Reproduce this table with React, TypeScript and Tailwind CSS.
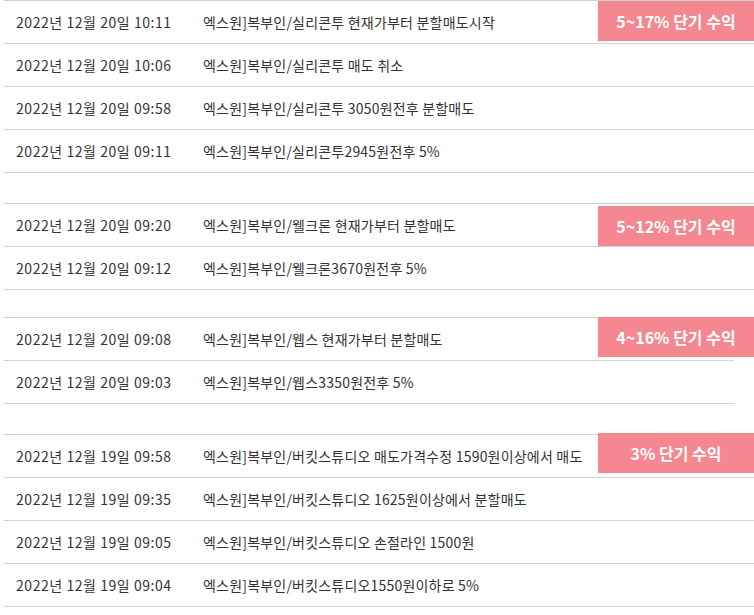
import React from 'react';

interface Row {
  date: string;
  msg: string;
}

interface GroupProps {
  rows: Row[];
  badge: string;
  className: string;
  badgeClass: string;
}

const Group: React.FC<GroupProps> = ({ rows, badge, className, badgeClass }) => {
  return (
    <div className={`relative border-t border-[#c9d1dd] ${className}`}>
      {rows.map((r, i) => (
        <div key={i} className="h-[43px] border-b border-[#d2d2d2] flex items-center text-[14px] text-[#333333]">
          <div className="w-[199px] shrink-0 pl-[12px] whitespace-nowrap tracking-[0.55px]">{r.date}</div>
          <div className="whitespace-nowrap tracking-[0.2px]">{r.msg}</div>
        </div>
      ))}
      <div
        className={`absolute h-[40px] w-[156px] bg-[#f4878f] flex items-center justify-center text-white font-bold text-[16px] ${badgeClass}`}
      >
        {badge}
      </div>
    </div>
  );
};

const App: React.FC = () => {
  return (
    <div
      className="w-[754px] h-[615px] bg-white overflow-hidden"
      style={{ fontFamily: '"Noto Sans CJK KR", "Noto Sans", sans-serif' }}
    >
      <Group
        className="ml-[4px] w-[750px]"
        badgeClass="top-0 right-0"
        badge="5~17% 단기 수익"
        rows={[
          { date: '2022년 12월 20일 10:11', msg: '엑스원]복부인/실리콘투 현재가부터 분할매도시작' },
          { date: '2022년 12월 20일 10:06', msg: '엑스원]복부인/실리콘투 매도 취소' },
          { date: '2022년 12월 20일 09:58', msg: '엑스원]복부인/실리콘투 3050원전후 분할매도' },
          { date: '2022년 12월 20일 09:11', msg: '엑스원]복부인/실리콘투2945원전후 5%' },
        ]}
      />
      <Group
        className="ml-[4px] w-[750px] mt-[30px]"
        badgeClass="top-[2px] right-0"
        badge="5~12% 단기 수익"
        rows={[
          { date: '2022년 12월 20일 09:20', msg: '엑스원]복부인/웰크론 현재가부터 분할매도' },
          { date: '2022년 12월 20일 09:12', msg: '엑스원]복부인/웰크론3670원전후 5%' },
        ]}
      />
      <Group
        className="ml-[4px] w-[730px] mt-[27px]"
        badgeClass="top-[-1px] right-[-20px]"
        badge="4~16% 단기 수익"
        rows={[
          { date: '2022년 12월 20일 09:08', msg: '엑스원]복부인/웹스 현재가부터 분할매도' },
          { date: '2022년 12월 20일 09:03', msg: '엑스원]복부인/웹스3350원전후 5%' },
        ]}
      />
      <Group
        className="ml-[4px] w-[750px] mt-[30px]"
        badgeClass="top-[-2px] right-0"
        badge="3% 단기 수익"
        rows={[
          { date: '2022년 12월 19일 09:58', msg: '엑스원]복부인/버킷스튜디오 매도가격수정 1590원이상에서 매도' },
          { date: '2022년 12월 19일 09:35', msg: '엑스원]복부인/버킷스튜디오 1625원이상에서 분할매도' },
          { date: '2022년 12월 19일 09:05', msg: '엑스원]복부인/버킷스튜디오 손절라인 1500원' },
          { date: '2022년 12월 19일 09:04', msg: '엑스원]복부인/버킷스튜디오1550원이하로 5%' },
        ]}
      />
    </div>
  );
};

export default App;
